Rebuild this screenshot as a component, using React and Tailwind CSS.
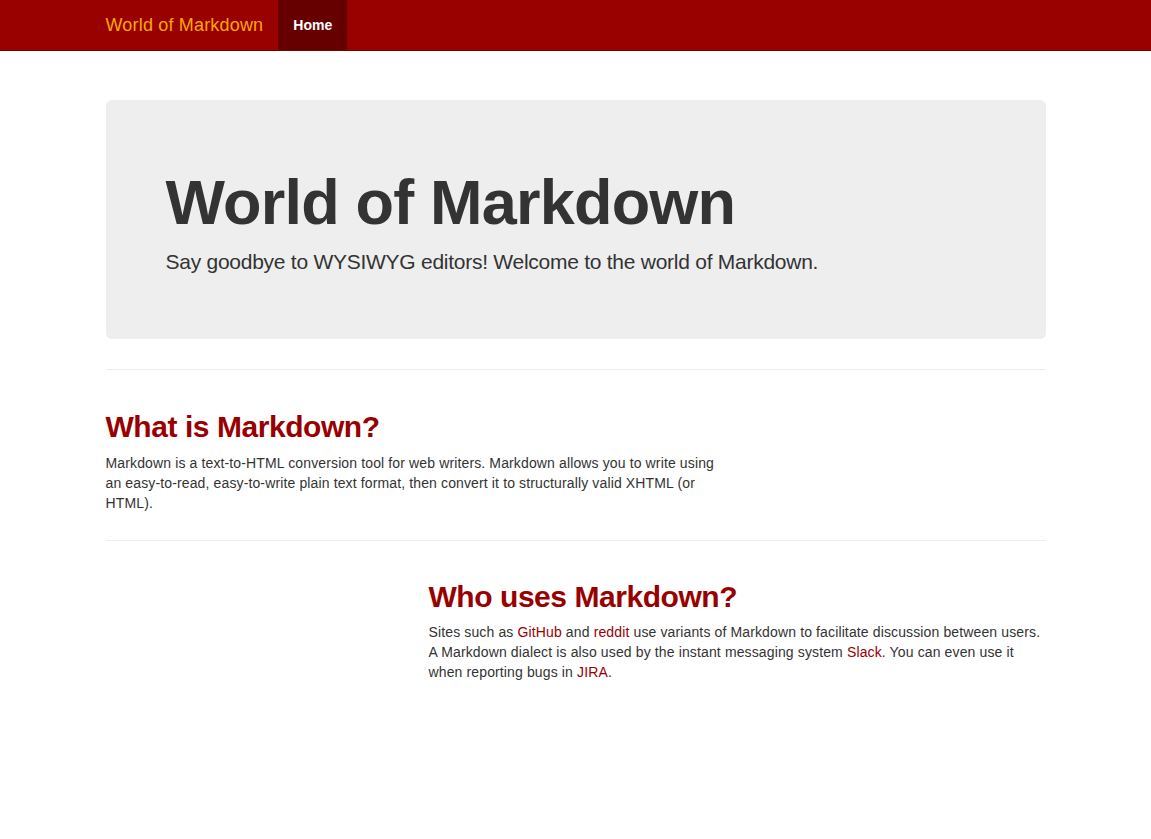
export default function App() {
  const link = "text-[#990000] hover:underline";
  return (
    <div className="min-h-[839px] bg-white text-[#333] text-[14px] leading-[20px] tracking-[0.13px] font-['Liberation_Sans',Arial,sans-serif]">
      {/* Navbar */}
      <nav className="h-[51px] bg-[#990000] border-b border-[#7a0000]">
        <div className="w-[940px] mx-auto flex h-[50px]">
          <a href="#" className="h-[50px] leading-[20px] py-[15px] pr-[15px] text-[18px] tracking-[0.18px] text-[#f7a800]">
            World of Markdown
          </a>
          <a href="#" className="h-[50px] px-[15px] py-[15px] bg-[#660000] text-white font-bold tracking-normal">
            Home
          </a>
        </div>
      </nav>

      <div className="w-[940px] mx-auto pt-[49px]">
        {/* Jumbotron */}
        <div className="bg-[#eeeeee] rounded-[6px] px-[60px] pt-[48px] pb-[47px]">
          <h1 className="mt-[20px] mb-[10px] text-[63px] leading-[69px] font-bold tracking-[-0.8px] text-[#333]">
            World of Markdown
          </h1>
          <p className="mb-[15px] text-[21px] leading-[30px] tracking-[-0.26px]">
            Say goodbye to WYSIWYG editors! Welcome to the world of Markdown.
          </p>
        </div>

        <hr className="mt-[30px] mb-[20px] border-t border-[#eeeeee]" />

        <div className="flow-root w-[617px]">
          <h2 className="mt-[20px] mb-[10px] text-[30px] leading-[33px] font-bold tracking-[-0.45px] text-[#990000]">
            What is Markdown?
          </h2>
          <p className="mb-[10px]">
            Markdown is a text-to-HTML conversion tool for web writers. Markdown allows you to write using an easy-to-read, easy-to-write plain text format, then convert it to structurally valid XHTML (or HTML).
          </p>
        </div>

        <hr className="mt-[17px] mb-[19px] border-t border-[#eeeeee]" />

        <div className="flow-root ml-[323px] w-[617px]">
          <h2 className="mt-[20px] mb-[9px] text-[30px] leading-[33px] font-bold tracking-[-0.45px] text-[#990000]">
            Who uses Markdown?
          </h2>
          <p className="mb-[10px]">
            Sites such as <a href="#" className={link}>GitHub</a> and <a href="#" className={link}>reddit</a> use variants of Markdown to facilitate discussion between users. A Markdown dialect is also used by the instant messaging system <a href="#" className={link}>Slack</a>. You can even use it when reporting bugs in <a href="#" className={link}>JIRA</a>.
          </p>
        </div>
      </div>
    </div>
  );
}
